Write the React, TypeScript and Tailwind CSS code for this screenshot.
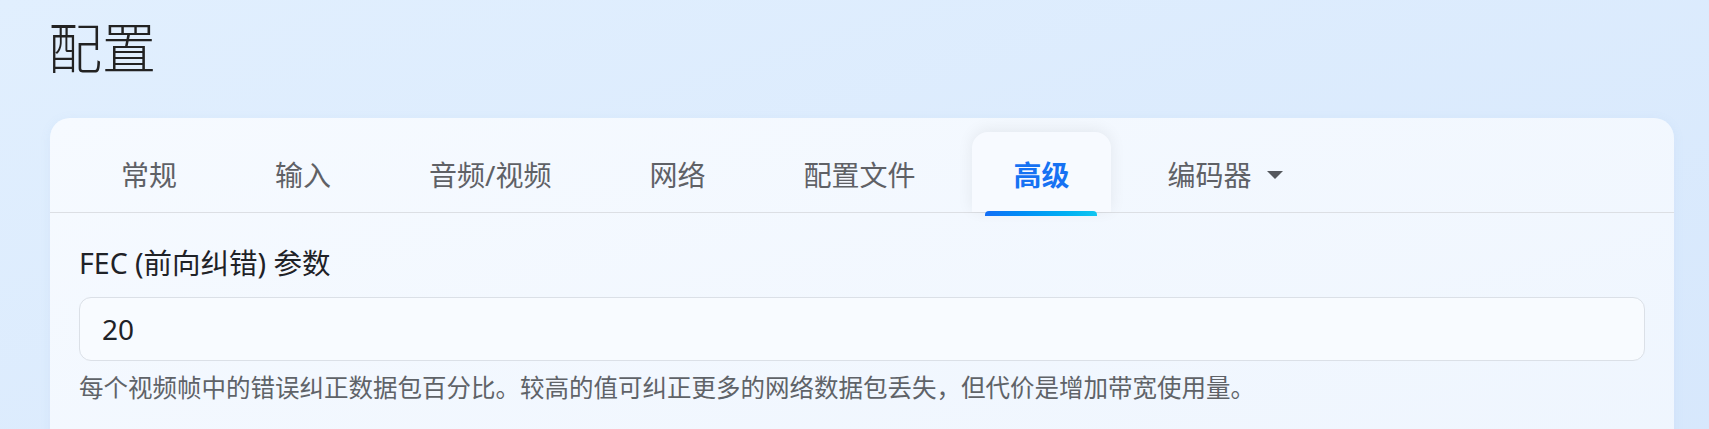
import React from "react";

const tabs = ["常规", "输入", "音频/视频", "网络", "配置文件", "高级"];

export default function App() {
  const font = {
    fontFamily: '"Noto Sans", "Noto Sans CJK SC", sans-serif',
  };
  return (
    <div
      className="min-h-screen bg-gradient-to-br from-[#e1effe] to-[#d6e7fc] pl-[50px] pr-[35px] pt-[16px]"
      style={font}
    >
      <h1 className="text-[54px] leading-[64px] font-light text-[#222222] -ml-[2px]">配置</h1>
      <div className="mt-[38px] rounded-[20px] bg-gradient-to-br from-[#f6faff] to-[#eef5fe] shadow-[0_2px_12px_rgba(120,150,200,0.08)] h-[400px]">
        <div className="flex items-end gap-4 pl-[30px] pt-[14px] border-b border-[#dcdfe4]">
          {tabs.map((t) => {
            const active = t === "高级";
            return (
              <div
                key={t}
                className={
                  active
                    ? "relative h-[80px] px-[41px] pt-[5px] flex items-center rounded-t-[16px] bg-[#f7faff] shadow-[0_-2px_16px_rgba(0,0,0,0.07)] text-[28px] font-bold text-[#1672f3]"
                    : "relative h-[80px] px-[41px] pt-[5px] flex items-center text-[28px] text-[#5f6166]"
                }
              >
                <span className="leading-none">{t}</span>
                {active && (
                  <div className="absolute left-[13px] right-[14px] bottom-[-4px] h-[5px] rounded-t-[4px] bg-gradient-to-r from-[#136ef6] to-[#12c6f0]" />
                )}
              </div>
            );
          })}
          <div className="h-[80px] px-[41px] pt-[5px] flex items-center text-[28px] text-[#5f6166]">
            <span className="leading-none">编码器</span>
            <svg className="ml-[15px]" width="16" height="8" viewBox="0 0 16 8">
              <path d="M0 0 L16 0 L8 8 Z" fill="#55585d" />
            </svg>
          </div>
        </div>
        <div className="px-[29px] pt-[30px]">
          <div className="text-[28.5px] leading-[40px] text-[#1f2227]">FEC (前向纠错) 参数</div>
          <div className="mt-[14px] h-[64px] rounded-[12px] border border-[#dbe0e7] bg-[#f8fbff] flex items-center pl-[22px] text-[28px] text-[#1f2227]">
            20
          </div>
          <div className="mt-[9px] text-[24.5px] leading-[36px] text-[#5f6368]">
            每个视频帧中的错误纠正数据包百分比。较高的值可纠正更多的网络数据包丢失，但代价是增加带宽使用量。
          </div>
        </div>
      </div>
    </div>
  );
}
